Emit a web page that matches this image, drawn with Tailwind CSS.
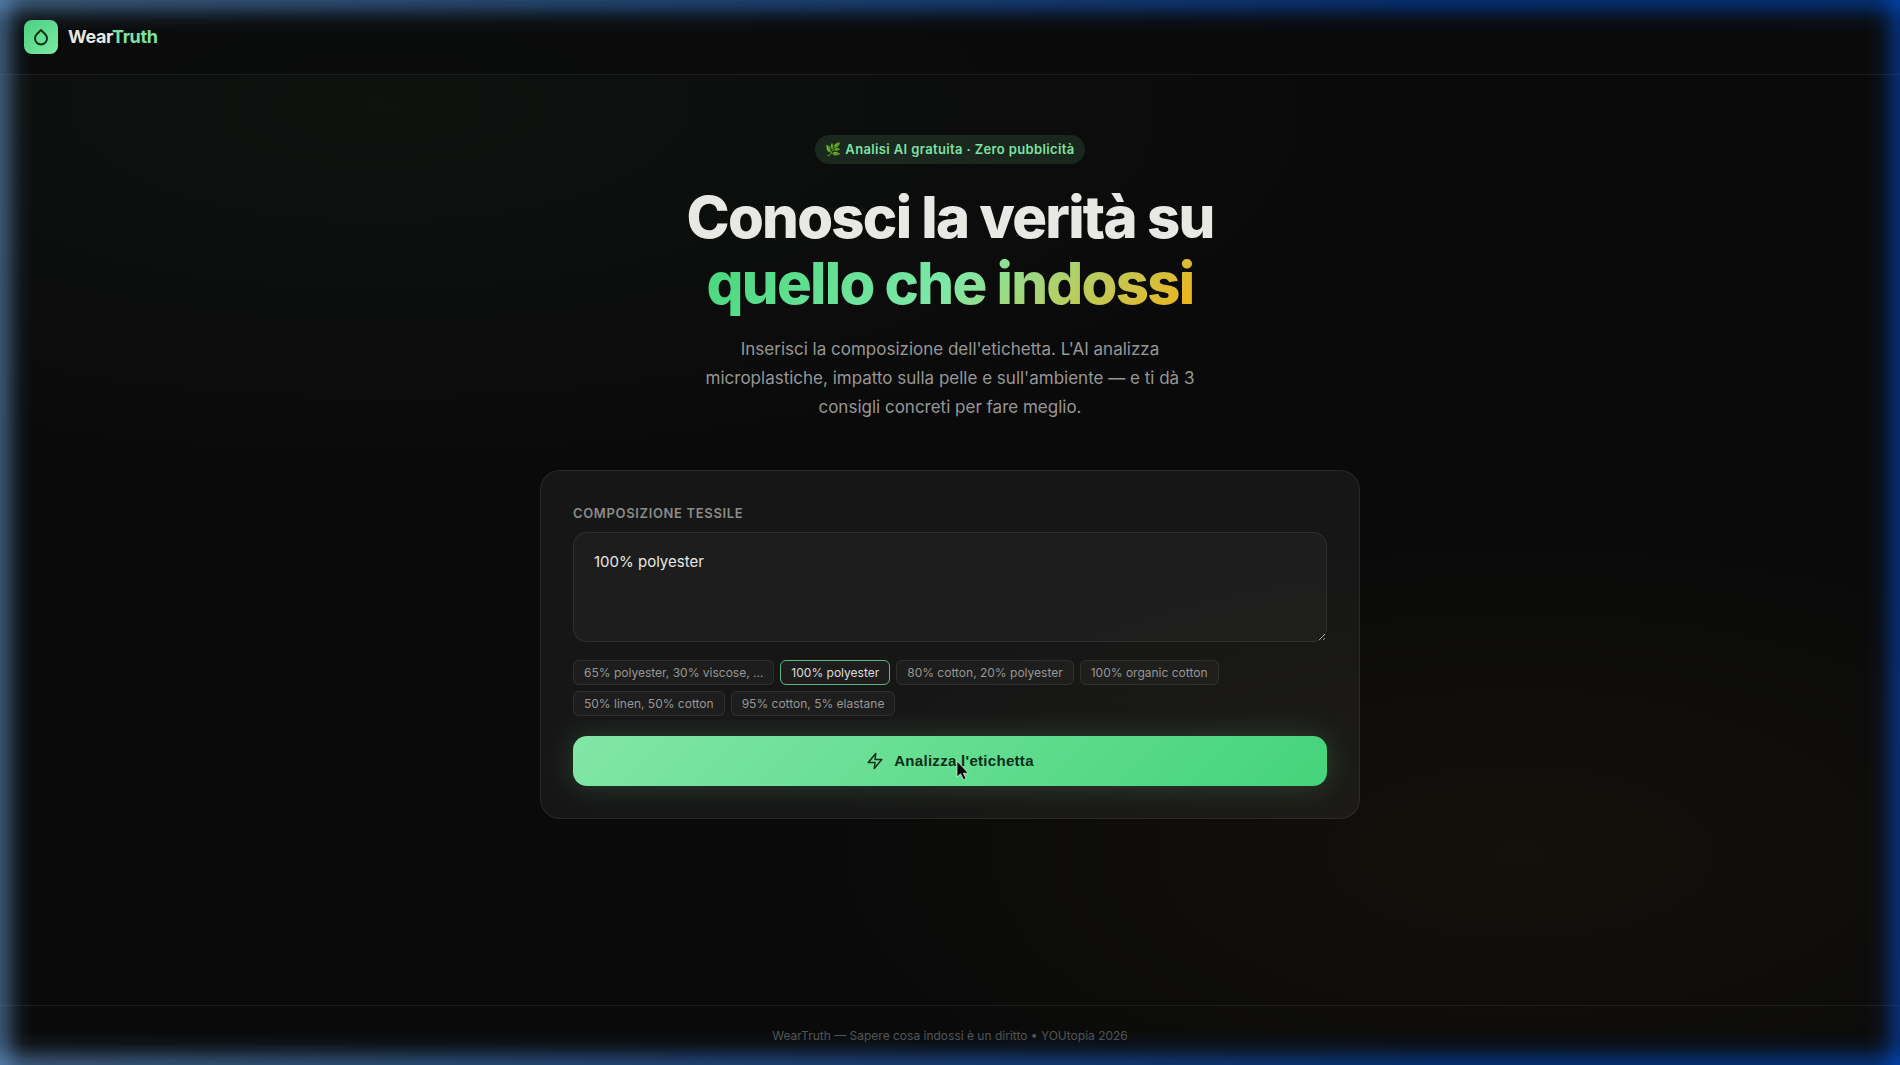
<!DOCTYPE html>
<html lang="it">
<head>
<meta charset="utf-8">
<meta name="viewport" content="width=device-width, initial-scale=1">
<title>WearTruth</title>
<script src="https://cdn.jsdelivr.net/npm/@tailwindcss/browser@4"></script>
</head>
<body class="min-h-screen flex flex-col bg-[#0a0a0a] bg-[radial-gradient(ellipse_60%_40%_at_20%_10%,rgba(110,222,140,0.04)_0%,transparent_85%),radial-gradient(ellipse_50%_40%_at_80%_80%,rgba(251,191,36,0.035)_0%,transparent_75%)] text-[#e8e8e4] font-['Inter',sans-serif]">
  <header class="border-b border-white/8 bg-[#0a0a0a]/70 px-6 py-5 h-[75px]">
    <a href="#" class="inline-flex items-center gap-2.5">
      <span class="flex size-[34px] items-center justify-center rounded-lg bg-[linear-gradient(135deg,#4ad67c,#7ee8a4)]">
        <svg class="size-[18px]" viewBox="0 0 24 24" fill="none" stroke="#0a2e18" stroke-width="2.5" stroke-linecap="round" stroke-linejoin="round" aria-hidden="true"><path d="M12 2.69l5.66 5.66a8 8 0 1 1-11.31 0z"/></svg>
      </span>
      <span class="text-lg font-bold tracking-[-0.36px]">Wear<span class="text-[#7ee2a2]">Truth</span></span>
    </a>
  </header>

  <main class="flex flex-1 flex-col items-center px-6 pt-[60px]">
    <p class="flex h-[29px] items-center rounded-full bg-[#86e5a5]/12 px-2.5 text-[13px] font-semibold tracking-[0.37px] text-[#7ee2a2]">🌿 Analisi AI gratuita · Zero pubblicità</p>
    <h1 class="mt-5 text-center text-[58px] leading-[66px] font-extrabold tracking-[-0.03em]">Conosci la verità su<br><span class="inline-block bg-[linear-gradient(135deg,#44d67a,#7ee8a8_50%,#f5b014)] bg-clip-text text-transparent">quello che indossi</span></h1>
    <p class="mt-[19px] max-w-[520px] text-center text-[17px] leading-[29px] text-[#979795]">Inserisci la composizione dell'etichetta. L'AI analizza microplastiche, impatto sulla pelle e sull'ambiente — e ti dà 3 consigli concreti per fare meglio.</p>

    <form class="mt-12 w-full max-w-[820px] rounded-[20px] border border-white/8 bg-white/5 p-8">
      <label for="composition" class="block text-[13px] leading-5 font-semibold tracking-[0.65px] text-[#8b8b89] uppercase">Composizione tessile</label>
      <textarea id="composition" class="mt-[9px] block h-[110px] w-full resize-y rounded-[14px] border border-white/8 bg-white/3 px-5 py-[17px] text-[15px] leading-6 outline-none">100% polyester</textarea>
      <div class="mt-[18px] flex flex-wrap gap-1.5 text-xs text-[#979795]">
        <button type="button" class="h-[25px] rounded-md border border-white/8 bg-white/3 px-2.5">65% polyester, 30% viscose, ...</button>
        <button type="button" class="h-[25px] rounded-md border border-[#5fb57f] bg-white/3 px-2.5 text-[#dcdcd8]">100% polyester</button>
        <button type="button" class="h-[25px] rounded-md border border-white/8 bg-white/3 px-2.5">80% cotton, 20% polyester</button>
        <button type="button" class="h-[25px] rounded-md border border-white/8 bg-white/3 px-2.5">100% organic cotton</button>
        <button type="button" class="h-[25px] rounded-md border border-white/8 bg-white/3 px-2.5">50% linen, 50% cotton</button>
        <button type="button" class="h-[25px] rounded-md border border-white/8 bg-white/3 px-2.5">95% cotton, 5% elastane</button>
      </div>
      <button type="button" class="relative mt-5 flex h-[50px] w-full items-center justify-center gap-2.5 rounded-[14px] bg-[linear-gradient(135deg,#82e6a6,#44d47a)] font-['Liberation_Sans',Arial,sans-serif] text-[15px] font-bold tracking-[0.3px] text-[#0a2e18] shadow-[0_0_30px_rgba(134,229,165,0.2)]">
        <svg class="size-[18px]" viewBox="0 0 24 24" fill="none" stroke="currentColor" stroke-width="2" stroke-linecap="round" stroke-linejoin="round" aria-hidden="true"><path d="M13 2 3 14h9l-1 8 10-12h-9l1-8z"/></svg>
        Analizza l'etichetta
        <svg class="absolute top-6 left-[calc(50%+6px)] h-[22px] w-[14px]" viewBox="0 0 14 22" aria-hidden="true"><path d="M1 1v16l3.500-3.300 3 6 2.600-1.200-2.800-5.300h5z" fill="#000" stroke="#fff" stroke-opacity=".8" stroke-width=".8"/></svg>
      </button>
    </form>
  </main>

  <footer class="h-[60px] border-t border-white/8 pt-5 text-center text-xs leading-5 text-[#555553]">WearTruth — Sapere cosa indossi è un diritto • YOUtopia 2026</footer>

  <div aria-hidden="true" class="pointer-events-none fixed inset-0 bg-[linear-gradient(to_right,#6499d0,#0050cc_75%,#0050d0)] [mask-image:linear-gradient(to_right,rgba(0,0,0,.5),rgba(0,0,0,.42)_6px,rgba(0,0,0,.22)_14px,rgba(0,0,0,.07)_22px,transparent_34px,transparent_calc(100%-34px),rgba(0,0,0,.07)_calc(100%-22px),rgba(0,0,0,.22)_calc(100%-14px),rgba(0,0,0,.42)_calc(100%-6px),rgba(0,0,0,.5)),linear-gradient(rgba(0,0,0,.5),rgba(0,0,0,.42)_6px,rgba(0,0,0,.22)_14px,rgba(0,0,0,.07)_22px,transparent_34px,transparent_calc(100%-34px),rgba(0,0,0,.07)_calc(100%-22px),rgba(0,0,0,.22)_calc(100%-14px),rgba(0,0,0,.42)_calc(100%-6px),rgba(0,0,0,.5))]"></div>
</body>
</html>
